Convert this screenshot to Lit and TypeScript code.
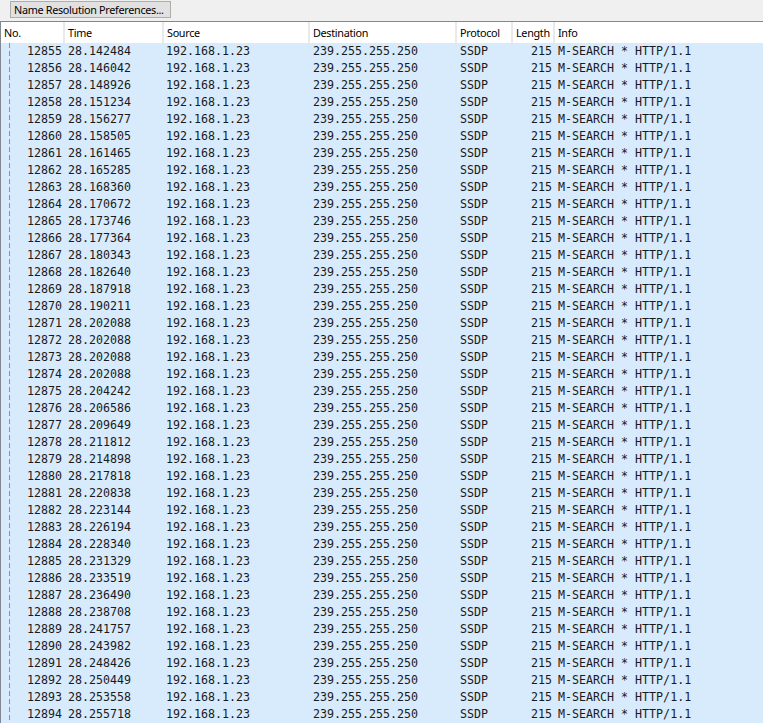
import { LitElement, html, css } from "lit";
import { customElement } from "lit/decorators.js";

const TIMES = "142484 146042 148926 151234 156277 158505 161465 165285 168360 170672 173746 177364 180343 182640 187918 190211 202088 202088 202088 202088 204242 206586 209649 211812 214898 217818 220838 223144 226194 228340 231329 233519 236490 238708 241757 243982 248426 250449 253558 255718".split(" ");
const HEAD = [
  { label: "No.", w: 64 },
  { label: "Time", w: 99 },
  { label: "Source", w: 146 },
  { label: "Destination", w: 147 },
  { label: "Protocol", w: 56 },
  { label: "Length", w: 42 },
  { label: "Info", w: 208 },
];
const ROW = [63, 98, 147, 147, 56, 42, 209];

@customElement("app-root")
export class AppRoot extends LitElement {
  static styles = css`
    :host {
      display: block;
      width: 763px;
      height: 723px;
      overflow: hidden;
      background: #f0f0f0;
    }
    .toolbar {
      height: 21px;
      padding: 1px 0 0 10px;
      box-sizing: border-box;
    }
    .btn {
      display: block;
      width: 161px;
      height: 17px;
      box-sizing: border-box;
      border: 1px solid #adadad;
      background: #e1e1e1;
      padding: 0 0 0 3px;
      margin: 0;
      font: 10.8px/15px "Noto Sans", sans-serif;
      letter-spacing: -0.3px;
      color: #000;
      text-align: left;
      white-space: nowrap;
    }
    .table {
      border-top: 1px solid #828790;
      border-left: 1px solid #828790;
      background: #fff;
      height: 702px;
      overflow: hidden;
    }
    .head {
      display: flex;
      height: 21px;
      box-sizing: border-box;
      background: #fff;
    }
    .hc {
      box-sizing: border-box;
      border-right: 2px solid #e9e9e9;
      padding-left: 3px;
      font: 10.8px/21px "Noto Sans", sans-serif;
      letter-spacing: -0.3px;
      color: #000;
      white-space: nowrap;
      overflow: hidden;
    }
    .hc:last-child { border-right: 0; }
    .body {
      position: relative;
      background: #d8ebfd;
    }
    .tree {
      position: absolute;
      left: 8px;
      top: 0;
      bottom: 0;
      width: 1px;
      background: repeating-linear-gradient(to bottom, #7f93a8 0 5px, transparent 5px 8px);
    }
    .row {
      display: flex;
      height: 17px;
      font: 11.65px/17px "DejaVu Sans Mono", monospace;
      color: #1a1a1a;
      white-space: pre;
    }
    .c { box-sizing: border-box; padding-left: 4px; }
    .r { text-align: right; padding: 0 2px 0 0; }
  `;

  render() {
    return html`
      <div class="toolbar"><button class="btn">Name Resolution Preferences...</button></div>
      <div class="table">
        <div class="head">
          ${HEAD.map((c) => html`<div class="hc" style="width:${c.w}px">${c.label}</div>`)}
        </div>
        <div class="body">
          <div class="tree"></div>
          ${TIMES.map(
            (t, i) => html`<div class="row">
              <div class="c r" style="width:${ROW[0]}px">${12855 + i}</div>
              <div class="c" style="width:${ROW[1]}px">28.${t}</div>
              <div class="c" style="width:${ROW[2]}px">192.168.1.23</div>
              <div class="c" style="width:${ROW[3]}px">239.255.255.250</div>
              <div class="c" style="width:${ROW[4]}px">SSDP</div>
              <div class="c r" style="width:${ROW[5]}px">215</div>
              <div class="c" style="width:${ROW[6]}px">M-SEARCH * HTTP/1.1</div>
            </div>`
          )}
        </div>
      </div>
    `;
  }
}
